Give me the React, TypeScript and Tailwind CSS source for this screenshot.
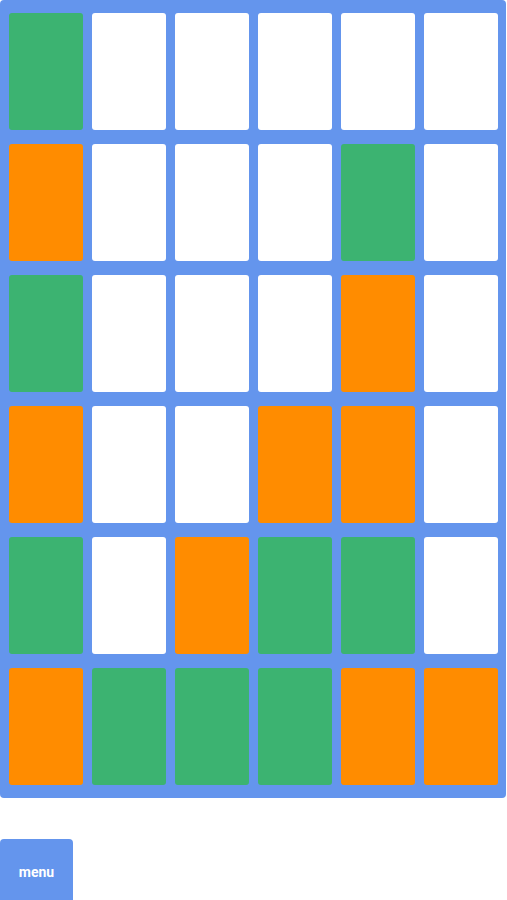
import React from "react";

type Cell = "g" | "o" | "w";

const rows: Cell[][] = [
  ["g", "w", "w", "w", "w", "w"],
  ["o", "w", "w", "w", "g", "w"],
  ["g", "w", "w", "w", "o", "w"],
  ["o", "w", "w", "o", "o", "w"],
  ["g", "w", "o", "g", "g", "w"],
  ["o", "g", "g", "g", "o", "o"],
];

const cellColor: Record<Cell, string> = {
  g: "bg-[#3cb371]",
  o: "bg-[#ff8c00]",
  w: "bg-white",
};

export default function App() {
  return (
    <div
      className="w-[507px] h-[900px] bg-white overflow-hidden"
      style={{ fontFamily: 'Roboto, "Liberation Sans", sans-serif' }}
    >
      <div className="w-[506px] bg-[#6495ed] rounded-[4px] pl-[9px] pr-[8px] pt-[13px] pb-[13px] grid grid-cols-[repeat(6,74px)] grid-rows-[repeat(6,117px)] gap-x-[9px] gap-y-[14px]">
        {rows.flat().map((c, i) => (
          <div key={i} className={`${cellColor[c]} rounded-[3px]`} />
        ))}
      </div>

      <button className="mt-[41px] w-[73px] h-[64px] pt-[3px] bg-[#6495ed] rounded-[4px] text-white text-[14px] font-bold flex items-center justify-center">
        menu
      </button>
    </div>
  );
}
